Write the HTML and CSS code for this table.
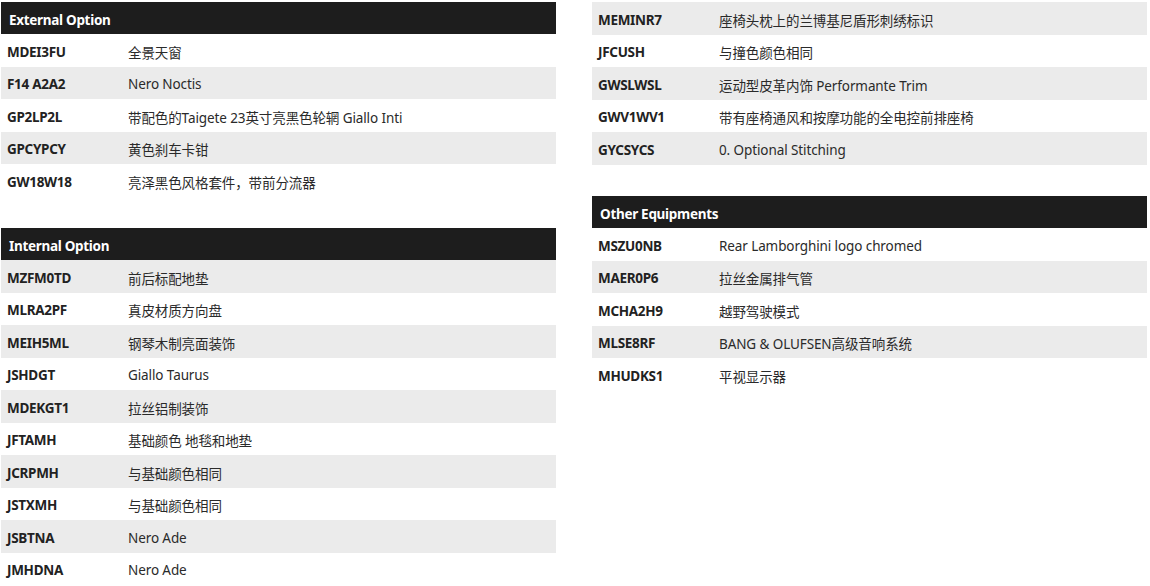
FILE: index.html
```html
<!DOCTYPE html>
<html lang="zh-CN">
<head>
<meta charset="utf-8">
<title>Options</title>
<link rel="stylesheet" href="styles.css">
</head>
<body>
<div class="page">
  <div class="col">
    <section class="sec">
      <div class="head">External Option</div>
      <div class="row"><span class="code">MDEI3FU</span><span class="val">全景天窗</span></div>
      <div class="row alt"><span class="code">F14 A2A2</span><span class="val">Nero Noctis</span></div>
      <div class="row"><span class="code">GP2LP2L</span><span class="val">带配色的Taigete 23英寸亮黑色轮辋 Giallo Inti</span></div>
      <div class="row alt"><span class="code">GPCYPCY</span><span class="val">黄色刹车卡钳</span></div>
      <div class="row"><span class="code">GW18W18</span><span class="val">亮泽黑色风格套件，带前分流器</span></div>
    </section>
    <section class="sec">
      <div class="head">Internal Option</div>
      <div class="row alt"><span class="code">MZFM0TD</span><span class="val">前后标配地垫</span></div>
      <div class="row"><span class="code">MLRA2PF</span><span class="val">真皮材质方向盘</span></div>
      <div class="row alt"><span class="code">MEIH5ML</span><span class="val">钢琴木制亮面装饰</span></div>
      <div class="row"><span class="code">JSHDGT</span><span class="val">Giallo Taurus</span></div>
      <div class="row alt"><span class="code">MDEKGT1</span><span class="val">拉丝铝制装饰</span></div>
      <div class="row"><span class="code">JFTAMH</span><span class="val">基础颜色 地毯和地垫</span></div>
      <div class="row alt"><span class="code">JCRPMH</span><span class="val">与基础颜色相同</span></div>
      <div class="row"><span class="code">JSTXMH</span><span class="val">与基础颜色相同</span></div>
      <div class="row alt"><span class="code">JSBTNA</span><span class="val">Nero Ade</span></div>
      <div class="row"><span class="code">JMHDNA</span><span class="val">Nero Ade</span></div>
    </section>
  </div>
  <div class="col">
    <section class="sec">
      <div class="row alt"><span class="code">MEMINR7</span><span class="val">座椅头枕上的兰博基尼盾形刺绣标识</span></div>
      <div class="row"><span class="code">JFCUSH</span><span class="val">与撞色颜色相同</span></div>
      <div class="row alt"><span class="code">GWSLWSL</span><span class="val">运动型皮革内饰 Performante Trim</span></div>
      <div class="row"><span class="code">GWV1WV1</span><span class="val">带有座椅通风和按摩功能的全电控前排座椅</span></div>
      <div class="row alt"><span class="code">GYCSYCS</span><span class="val">0. Optional Stitching</span></div>
    </section>
    <section class="sec">
      <div class="head">Other Equipments</div>
      <div class="row"><span class="code">MSZU0NB</span><span class="val">Rear Lamborghini logo chromed</span></div>
      <div class="row alt"><span class="code">MAER0P6</span><span class="val">拉丝金属排气管</span></div>
      <div class="row"><span class="code">MCHA2H9</span><span class="val">越野驾驶模式</span></div>
      <div class="row alt"><span class="code">MLSE8RF</span><span class="val">BANG &amp; OLUFSEN高级音响系统</span></div>
      <div class="row"><span class="code">MHUDKS1</span><span class="val">平视显示器</span></div>
    </section>
  </div>
</div>
</body>
</html>
```
FILE: styles.css
```css
html, body {
  margin: 0;
  padding: 0;
  background: #ffffff;
}
body {
  font-family: "Noto Sans", "Noto Sans CJK SC", sans-serif;
  color: #222222;
  overflow: hidden;
}
.page {
  display: flex;
  gap: 36px;
  padding: 2px 0 0 1px;
  width: 1146px;
}
.col {
  width: 555px;
  display: flex;
  flex-direction: column;
  gap: 31.5px;
}
.sec {
  display: flex;
  flex-direction: column;
}
.head {
  height: 32px;
  background: #1d1d1d;
  color: #ffffff;
  font-weight: 700;
  font-size: 13.5px;
  letter-spacing: -0.3px;
  display: flex;
  align-items: center;
  padding: 3px 0 0 8px;
  box-sizing: border-box;
}
.row {
  height: 32.5px;
  display: flex;
  align-items: center;
  font-size: 13.5px;
  padding-top: 3px;
  box-sizing: border-box;
}
.row.alt {
  background: #ebebeb;
}
.code {
  width: 121px;
  padding-left: 6px;
  font-weight: 700;
  letter-spacing: -0.3px;
  flex: none;
}
.val {
  font-weight: 400;
  color: #2a2a2a;
  letter-spacing: -0.1px;
}
```
